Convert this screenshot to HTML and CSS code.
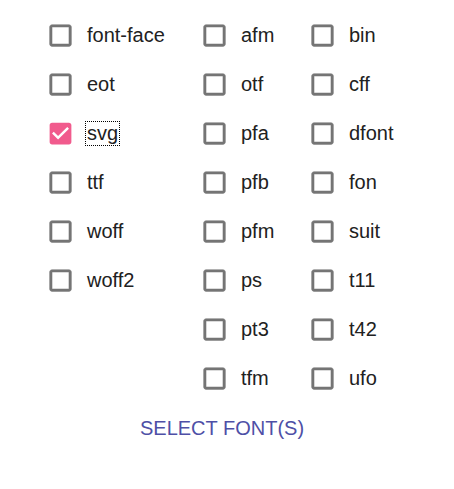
FILE: index.html
```html
<!DOCTYPE html>
<html>
<head>
<meta charset="utf-8">
<link rel="stylesheet" href="styles.css">
</head>
<body>
<div class="panel">
  <div class="grid">
    <div class="col">
      <label class="opt"><svg class="cb" viewBox="0 0 24 24"><path d="M19 5v14H5V5h14m0-2H5c-1.11 0-2 .9-2 2v14c0 1.1.89 2 2 2h14c1.1 0 2-.9 2-2V5c0-1.1-.9-2-2-2z"/></svg><span class="txt">font-face</span></label>
      <label class="opt"><svg class="cb" viewBox="0 0 24 24"><path d="M19 5v14H5V5h14m0-2H5c-1.11 0-2 .9-2 2v14c0 1.1.89 2 2 2h14c1.1 0 2-.9 2-2V5c0-1.1-.9-2-2-2z"/></svg><span class="txt">eot</span></label>
      <label class="opt"><svg class="cb checked" viewBox="0 0 24 24"><path d="M19 3H5c-1.11 0-2 .9-2 2v14c0 1.1.89 2 2 2h14c1.11 0 2-.9 2-2V5c0-1.1-.89-2-2-2zm-9 14l-5-5 1.41-1.41L10 14.17l7.59-7.59L19 8l-9 9z"/></svg><span class="txt focus">svg</span></label>
      <label class="opt"><svg class="cb" viewBox="0 0 24 24"><path d="M19 5v14H5V5h14m0-2H5c-1.11 0-2 .9-2 2v14c0 1.1.89 2 2 2h14c1.1 0 2-.9 2-2V5c0-1.1-.9-2-2-2z"/></svg><span class="txt">ttf</span></label>
      <label class="opt"><svg class="cb" viewBox="0 0 24 24"><path d="M19 5v14H5V5h14m0-2H5c-1.11 0-2 .9-2 2v14c0 1.1.89 2 2 2h14c1.1 0 2-.9 2-2V5c0-1.1-.9-2-2-2z"/></svg><span class="txt">woff</span></label>
      <label class="opt"><svg class="cb" viewBox="0 0 24 24"><path d="M19 5v14H5V5h14m0-2H5c-1.11 0-2 .9-2 2v14c0 1.1.89 2 2 2h14c1.1 0 2-.9 2-2V5c0-1.1-.9-2-2-2z"/></svg><span class="txt">woff2</span></label>
    </div>
    <div class="col">
      <label class="opt"><svg class="cb" viewBox="0 0 24 24"><path d="M19 5v14H5V5h14m0-2H5c-1.11 0-2 .9-2 2v14c0 1.1.89 2 2 2h14c1.1 0 2-.9 2-2V5c0-1.1-.9-2-2-2z"/></svg><span class="txt">afm</span></label>
      <label class="opt"><svg class="cb" viewBox="0 0 24 24"><path d="M19 5v14H5V5h14m0-2H5c-1.11 0-2 .9-2 2v14c0 1.1.89 2 2 2h14c1.1 0 2-.9 2-2V5c0-1.1-.9-2-2-2z"/></svg><span class="txt">otf</span></label>
      <label class="opt"><svg class="cb" viewBox="0 0 24 24"><path d="M19 5v14H5V5h14m0-2H5c-1.11 0-2 .9-2 2v14c0 1.1.89 2 2 2h14c1.1 0 2-.9 2-2V5c0-1.1-.9-2-2-2z"/></svg><span class="txt">pfa</span></label>
      <label class="opt"><svg class="cb" viewBox="0 0 24 24"><path d="M19 5v14H5V5h14m0-2H5c-1.11 0-2 .9-2 2v14c0 1.1.89 2 2 2h14c1.1 0 2-.9 2-2V5c0-1.1-.9-2-2-2z"/></svg><span class="txt">pfb</span></label>
      <label class="opt"><svg class="cb" viewBox="0 0 24 24"><path d="M19 5v14H5V5h14m0-2H5c-1.11 0-2 .9-2 2v14c0 1.1.89 2 2 2h14c1.1 0 2-.9 2-2V5c0-1.1-.9-2-2-2z"/></svg><span class="txt">pfm</span></label>
      <label class="opt"><svg class="cb" viewBox="0 0 24 24"><path d="M19 5v14H5V5h14m0-2H5c-1.11 0-2 .9-2 2v14c0 1.1.89 2 2 2h14c1.1 0 2-.9 2-2V5c0-1.1-.9-2-2-2z"/></svg><span class="txt">ps</span></label>
      <label class="opt"><svg class="cb" viewBox="0 0 24 24"><path d="M19 5v14H5V5h14m0-2H5c-1.11 0-2 .9-2 2v14c0 1.1.89 2 2 2h14c1.1 0 2-.9 2-2V5c0-1.1-.9-2-2-2z"/></svg><span class="txt">pt3</span></label>
      <label class="opt"><svg class="cb" viewBox="0 0 24 24"><path d="M19 5v14H5V5h14m0-2H5c-1.11 0-2 .9-2 2v14c0 1.1.89 2 2 2h14c1.1 0 2-.9 2-2V5c0-1.1-.9-2-2-2z"/></svg><span class="txt">tfm</span></label>
    </div>
    <div class="col">
      <label class="opt"><svg class="cb" viewBox="0 0 24 24"><path d="M19 5v14H5V5h14m0-2H5c-1.11 0-2 .9-2 2v14c0 1.1.89 2 2 2h14c1.1 0 2-.9 2-2V5c0-1.1-.9-2-2-2z"/></svg><span class="txt">bin</span></label>
      <label class="opt"><svg class="cb" viewBox="0 0 24 24"><path d="M19 5v14H5V5h14m0-2H5c-1.11 0-2 .9-2 2v14c0 1.1.89 2 2 2h14c1.1 0 2-.9 2-2V5c0-1.1-.9-2-2-2z"/></svg><span class="txt">cff</span></label>
      <label class="opt"><svg class="cb" viewBox="0 0 24 24"><path d="M19 5v14H5V5h14m0-2H5c-1.11 0-2 .9-2 2v14c0 1.1.89 2 2 2h14c1.1 0 2-.9 2-2V5c0-1.1-.9-2-2-2z"/></svg><span class="txt">dfont</span></label>
      <label class="opt"><svg class="cb" viewBox="0 0 24 24"><path d="M19 5v14H5V5h14m0-2H5c-1.11 0-2 .9-2 2v14c0 1.1.89 2 2 2h14c1.1 0 2-.9 2-2V5c0-1.1-.9-2-2-2z"/></svg><span class="txt">fon</span></label>
      <label class="opt"><svg class="cb" viewBox="0 0 24 24"><path d="M19 5v14H5V5h14m0-2H5c-1.11 0-2 .9-2 2v14c0 1.1.89 2 2 2h14c1.1 0 2-.9 2-2V5c0-1.1-.9-2-2-2z"/></svg><span class="txt">suit</span></label>
      <label class="opt"><svg class="cb" viewBox="0 0 24 24"><path d="M19 5v14H5V5h14m0-2H5c-1.11 0-2 .9-2 2v14c0 1.1.89 2 2 2h14c1.1 0 2-.9 2-2V5c0-1.1-.9-2-2-2z"/></svg><span class="txt">t11</span></label>
      <label class="opt"><svg class="cb" viewBox="0 0 24 24"><path d="M19 5v14H5V5h14m0-2H5c-1.11 0-2 .9-2 2v14c0 1.1.89 2 2 2h14c1.1 0 2-.9 2-2V5c0-1.1-.9-2-2-2z"/></svg><span class="txt">t42</span></label>
      <label class="opt"><svg class="cb" viewBox="0 0 24 24"><path d="M19 5v14H5V5h14m0-2H5c-1.11 0-2 .9-2 2v14c0 1.1.89 2 2 2h14c1.1 0 2-.9 2-2V5c0-1.1-.9-2-2-2z"/></svg><span class="txt">ufo</span></label>
    </div>
  </div>
  <div class="actions">
    <button class="btn">SELECT FONT(S)</button>
  </div>
</div>
</body>
</html>
```
FILE: styles.css
```css
html, body {
  margin: 0;
  padding: 0;
  background: #ffffff;
}
body {
  font-family: "Liberation Sans", Arial, sans-serif;
  width: 454px;
  height: 489px;
  overflow: hidden;
}
.panel {
  padding-top: 11.5px;
}
.grid {
  display: grid;
  grid-template-columns: 154px 108px 1fr;
  padding-left: 46.4px;
}
.col {
  display: flex;
  flex-direction: column;
}
.opt {
  display: flex;
  align-items: center;
  height: 48.9px;
}
.cb {
  width: 29px;
  height: 29px;
  flex: none;
  fill: #757575;
  stroke: #757575;
  stroke-width: 0.4;
}
.cb.checked {
  fill: #f15b8d;
  stroke: none;
}
.txt {
  margin-left: 11.6px;
  font-size: 20px;
  line-height: 23px;
  color: #212121;
}
.txt.focus {
  outline: 1px dotted #000;
  outline-offset: 0;
  padding: 0 1px;
  margin-left: 10.6px;
}
.actions {
  display: flex;
  justify-content: center;
  padding-right: 10px;
  margin-top: 7px;
}
.btn {
  border: none;
  background: transparent;
  font-family: "Liberation Sans", Arial, sans-serif;
  font-size: 20px;
  color: #4e4fa6;
  height: 36px;
  padding: 0 8px;
  line-height: 36px;
}
```
